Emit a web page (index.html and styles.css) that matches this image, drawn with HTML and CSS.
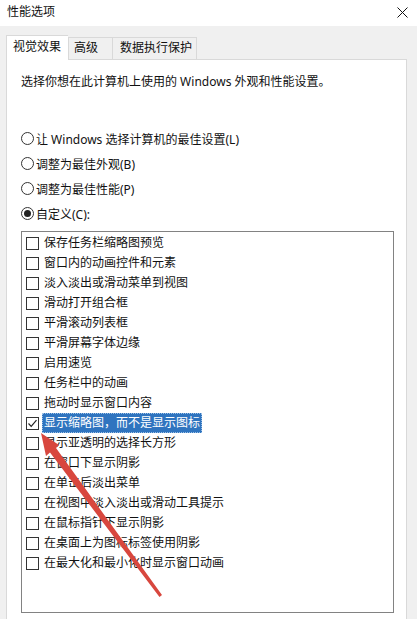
FILE: index.html
```html
<!DOCTYPE html>
<html lang="zh-CN">
<head>
    <meta charset="UTF-8">
    <title>性能选项</title>
    <link rel="stylesheet" href="styles.css">
</head>
<body>
    <div class="window">
        <div class="titlebar">
            <span class="title">性能选项</span>
            <svg class="close" width="11" height="11" viewBox="0 0 11 11">
                <path d="M0.5 0.5 L10.5 10.5 M10.5 0.5 L0.5 10.5" stroke="#111" stroke-width="1" fill="none"/>
            </svg>
        </div>

        <div class="content">
            <div class="tabs">
                <div class="tab active">视觉效果</div>
                <div class="tab tab-adv">高级</div>
                <div class="tab tab-dep">数据执行保护</div>
            </div>

            <div class="panel">
                <p class="desc">选择你想在此计算机上使用的 Windows 外观和性能设置。</p>

                <div class="radios">
                    <div class="radio-row"><span class="radio"></span>让 Windows 选择计算机的最佳设置(L)</div>
                    <div class="radio-row"><span class="radio"></span>调整为最佳外观(B)</div>
                    <div class="radio-row"><span class="radio"></span>调整为最佳性能(P)</div>
                    <div class="radio-row"><span class="radio on"></span>自定义(C):</div>
                </div>

                <div class="listbox">
                    <div class="check-row"><span class="box"></span><span class="label">保存任务栏缩略图预览</span></div>
                    <div class="check-row"><span class="box"></span><span class="label">窗口内的动画控件和元素</span></div>
                    <div class="check-row"><span class="box"></span><span class="label">淡入淡出或滑动菜单到视图</span></div>
                    <div class="check-row"><span class="box"></span><span class="label">滑动打开组合框</span></div>
                    <div class="check-row"><span class="box"></span><span class="label">平滑滚动列表框</span></div>
                    <div class="check-row"><span class="box"></span><span class="label">平滑屏幕字体边缘</span></div>
                    <div class="check-row"><span class="box"></span><span class="label">启用速览</span></div>
                    <div class="check-row"><span class="box"></span><span class="label">任务栏中的动画</span></div>
                    <div class="check-row"><span class="box"></span><span class="label">拖动时显示窗口内容</span></div>
                    <div class="check-row"><span class="box checked">
                        <svg width="11" height="11" viewBox="0 0 11 11"><path d="M1.5 5.5 L4.2 8.3 L9.5 2.2" stroke="#222" stroke-width="1.2" fill="none"/></svg>
                    </span><span class="label selected">显示缩略图，而不是显示图标</span></div>
                    <div class="check-row"><span class="box"></span><span class="label">显示亚透明的选择长方形</span></div>
                    <div class="check-row"><span class="box"></span><span class="label">在窗口下显示阴影</span></div>
                    <div class="check-row"><span class="box"></span><span class="label">在单击后淡出菜单</span></div>
                    <div class="check-row"><span class="box"></span><span class="label">在视图中淡入淡出或滑动工具提示</span></div>
                    <div class="check-row"><span class="box"></span><span class="label">在鼠标指针下显示阴影</span></div>
                    <div class="check-row"><span class="box"></span><span class="label">在桌面上为图标标签使用阴影</span></div>
                    <div class="check-row"><span class="box"></span><span class="label">在最大化和最小化时显示窗口动画</span></div>
                </div>
            </div>
        </div>

        <!-- 红色箭头标注 -->
        <svg class="arrow" width="417" height="619" viewBox="0 0 417 619">
            <polygon points="41,433 59,445 56,448 162,595 159.5,597 50,452.5 46,456" fill="#d8473e"/>
        </svg>
    </div>
</body>
</html>
```

FILE: styles.css
```css
body {
    margin: 0;
    font-family: "Noto Sans", "Noto Sans CJK SC", sans-serif;
    font-size: 12px;
    color: #111;
}

.window {
    position: relative;
    width: 417px;
    height: 619px;
    overflow: hidden;
    background: #f0f0f0;
}

.titlebar {
    height: 22px;
    padding: 0 9px 4px 7px;
    background: #fff;
    display: flex;
    align-items: center;
    justify-content: space-between;
}

.close {
    margin-top: 2px;
}

.content {
    padding: 9px 10px 0 6px;
}

.tabs {
    display: flex;
    align-items: flex-end;
    height: 24px;
}

.tab {
    box-sizing: border-box;
    height: 22px;
    line-height: 20px;
    padding-left: 6px;
    border: 1px solid #d9d9d9;
    border-bottom: none;
    background: #f0f0f0;
}

.tab.active {
    position: relative;
    z-index: 1;
    width: 62px;
    height: 25px;
    line-height: 22px;
    margin-bottom: -1px;
    background: #fff;
    border-right: none;
}

.tab-adv {
    width: 45px;
    padding-left: 5px;
}

.tab-dep {
    width: 84px;
    padding-left: 7px;
    border-left: none;
}

.panel {
    box-sizing: border-box;
    width: 401px;
    height: 600px;
    background: #fff;
    border: 1px solid #d9d9d9;
    padding: 12px 0 0 14px;
}

.desc {
    margin: 0;
    line-height: 20px;
}

.radios {
    margin-top: 34px;
}

.radio-row {
    height: 25px;
    display: flex;
    align-items: center;
    gap: 2px;
}

.radio {
    box-sizing: border-box;
    width: 13px;
    height: 13px;
    border: 1px solid #333;
    border-radius: 50%;
    background: #fff;
    display: flex;
    align-items: center;
    justify-content: center;
}

.radio.on::after {
    content: "";
    width: 7px;
    height: 7px;
    border-radius: 50%;
    background: #222;
}

.listbox {
    box-sizing: border-box;
    width: 373px;
    height: 382px;
    margin-top: 5px;
    border: 1px solid #828282;
    padding: 1px 0 0 4px;
}

.check-row {
    height: 20px;
    display: flex;
    align-items: center;
}

.box {
    box-sizing: border-box;
    width: 13px;
    height: 13px;
    border: 1px solid #333;
    background: #fff;
    display: flex;
    align-items: center;
    justify-content: center;
}

.label {
    margin-left: 3px;
    padding: 0 1px;
    line-height: 18px;
    border: 1px solid transparent;
}

.label.selected {
    background: #2f74bf;
    color: #fff;
    border: 1px dotted #9cc0e6;
}

.arrow {
    position: absolute;
    left: 0;
    top: 0;
}
```
